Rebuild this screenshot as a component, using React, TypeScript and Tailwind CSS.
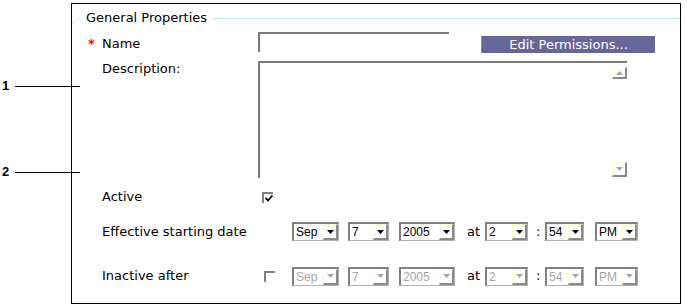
import React from 'react';

const labelFont = "font-['DejaVu_Sans','Verdana',sans-serif] text-[13px] text-black";
const ctrlFont = "font-['Liberation_Sans','Arial',sans-serif] text-[12px]";

const ArrowBtn = ({ dir = 'down', disabled = false }: { dir?: 'up' | 'down'; disabled?: boolean }) => (
  <div className="w-[15px] h-full flex items-center justify-center border-l border-t border-[#ffffc8] border-r-2 border-b-2 border-r-[#8a8a8a] border-b-[#8a8a8a] bg-white">
    <svg width="7" height="4" viewBox="0 0 7 4">
      {dir === 'down' ? (
        <path d="M0 0 H7 L3.5 4 Z" fill={disabled ? '#a8a8a8' : '#000'} />
      ) : (
        <path d="M0 4 H7 L3.5 0 Z" fill="#a8a8a8" />
      )}
    </svg>
  </div>
);

const Select = ({ value, w, disabled = false }: { value: string; w: string; disabled?: boolean }) => (
  <div className={`${w} h-[19px] flex border-t-2 border-l-2 border-[#808080] border-r border-b border-r-[#b0b0b0] border-b-[#b0b0b0] bg-white`}>
    <span className={`${ctrlFont} flex-1 pl-[2px] leading-[16px] ${disabled ? 'text-[#a6a6a6]' : 'text-black'}`}>{value}</span>
    <ArrowBtn disabled={disabled} />
  </div>
);

const Check = ({ checked }: { checked: boolean }) => (
  <div className="w-[11px] h-[11px] border-t-2 border-l-2 border-[#808080] flex items-center justify-center">
    {checked && (
      <svg width="8" height="7" viewBox="0 0 8 7">
        <path d="M0.5 3 L3 5.5 L7.5 0.5" stroke="#000" strokeWidth="1.8" fill="none" />
      </svg>
    )}
  </div>
);

const DateRow = ({ disabled = false }: { disabled?: boolean }) => (
  <div className="flex items-center">
    <Select value="Sep" w="w-[47px]" disabled={disabled} />
    <div className="ml-[9px]"><Select value="7" w="w-[41px]" disabled={disabled} /></div>
    <div className="ml-[10px]"><Select value="2005" w="w-[56px]" disabled={disabled} /></div>
    <span className={`${labelFont} ml-[12px] w-[18px]`}>at</span>
    <Select value="2" w="w-[43px]" disabled={disabled} />
    <span className={`${labelFont} ml-[8px] w-[9px]`}>:</span>
    <Select value="54" w="w-[39px]" disabled={disabled} />
    <div className="ml-[11px]"><Select value="PM" w="w-[43px]" disabled={disabled} /></div>
  </div>
);

export default function App() {
  return (
    <div className="relative w-[687px] h-[307px] bg-white overflow-hidden">
      {/* callouts */}
      <div className="absolute left-[2px] top-[78px] flex items-center">
        <span className="font-['Liberation_Sans','Arial',sans-serif] font-bold text-[13px] leading-[16px] w-[13px]">1</span>
        <div className="w-[65px] h-px bg-black" />
      </div>
      <div className="absolute left-[2px] top-[164px] flex items-center">
        <span className="font-['Liberation_Sans','Arial',sans-serif] font-bold text-[13px] leading-[16px] w-[13px]">2</span>
        <div className="w-[65px] h-px bg-black" />
      </div>

      <div className="ml-[71px] mt-[3px] w-[610px] h-[301px] border border-black pt-[1px]">
        {/* legend */}
        <div className="flex items-center h-[26px]">
          <svg width="12" height="26" viewBox="0 0 12 26" className="shrink-0">
            <path d="M9 13.5 Q3 13.5 1.5 19" stroke="#bfeff2" strokeWidth="1" fill="none" />
          </svg>
          <span className={`${labelFont} ml-[2px] leading-[16px]`}>General Properties</span>
          <div className="flex-1 h-px bg-[#c4f0f3] ml-[6px]" />
        </div>

        <div className="pl-[16px]">
          {/* name */}
          <div className="flex h-[26px]">
            <div className={`${labelFont} w-[170px] flex items-center`}>
              <span className="w-[14px] text-[#ff0000] font-bold">*</span>
              <span>Name</span>
            </div>
            <div className="mt-[1px] w-[191px] h-[20px] border-t-2 border-l-2 border-[#7a7a7a]" />
            <div className="ml-[32px] mt-[5px] w-[174px] h-[17px] bg-[#666699] border-l border-[#8a8ab0] flex items-center justify-center">
              <span className="font-['DejaVu_Sans','Verdana',sans-serif] text-[13px] text-white leading-[15px]">Edit Permissions...</span>
            </div>
          </div>

          {/* description */}
          <div className="flex h-[126px]">
            <div className={`${labelFont} w-[170px] pl-[14px] pt-[4px] leading-[16px]`}>Description:</div>
            <div className="mt-[4px] w-[369px] h-[117px] border-t-2 border-l-2 border-[#7a7a7a] flex flex-col items-end justify-between pt-[4px] pb-[1px]">
              <div className="h-[12px]"><ArrowBtn dir="up" /></div>
              <div className="h-[15px]"><ArrowBtn dir="down" disabled /></div>
            </div>
          </div>

          {/* active */}
          <div className="flex h-[28px] items-center">
            <div className={`${labelFont} w-[170px] pl-[14px]`}>Active</div>
            <div className="ml-[4px]"><Check checked /></div>
          </div>

          {/* effective */}
          <div className="flex h-[41px] items-center">
            <div className={`${labelFont} w-[170px] pl-[14px]`}>Effective starting date</div>
            <div className="ml-[34px]"><DateRow /></div>
          </div>

          {/* inactive */}
          <div className="flex h-[48px] items-center">
            <div className={`${labelFont} w-[170px] pl-[14px]`}>Inactive after</div>
            <div className="ml-[6px] w-[28px]"><Check checked={false} /></div>
            <DateRow disabled />
          </div>
        </div>
      </div>
    </div>
  );
}
